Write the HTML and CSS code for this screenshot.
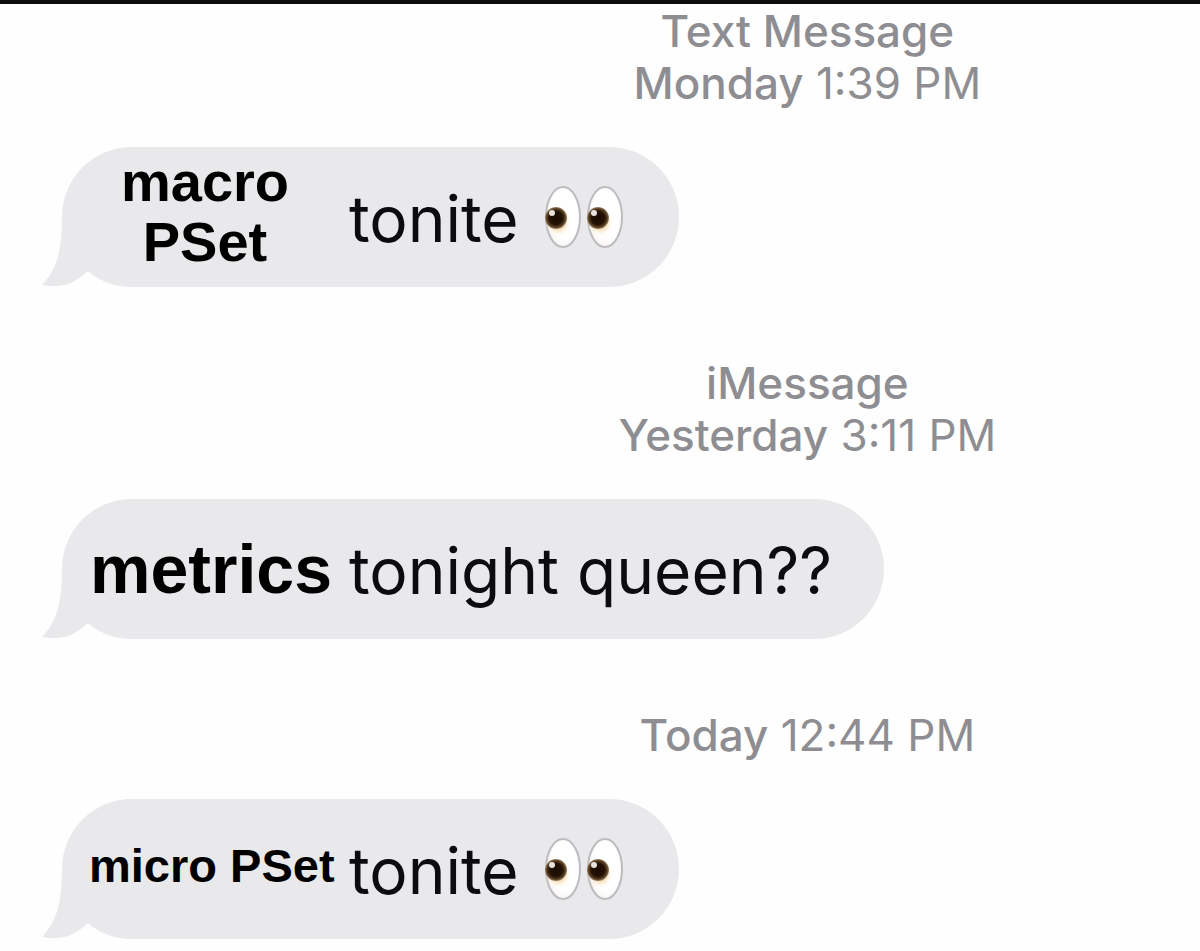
FILE: index.html
```html
<!DOCTYPE html>
<html lang="en">
<head>
<meta charset="utf-8">
<meta name="viewport" content="width=device-width, initial-scale=1">
<title>Messages</title>
<link rel="stylesheet" href="styles.css">
</head>
<body>
<svg class="defs" aria-hidden="true">
  <defs>
    <radialGradient id="white" cx="55%" cy="45%" r="60%">
      <stop offset="0.7" stop-color="#ffffff"/>
      <stop offset="1" stop-color="#f4efea"/>
    </radialGradient>
    <radialGradient id="iris">
      <stop offset="0" stop-color="#180a02"/>
      <stop offset="0.6" stop-color="#241304"/>
      <stop offset="0.85" stop-color="#5b4023"/>
      <stop offset="1" stop-color="#a08a6e"/>
    </radialGradient>
    <radialGradient id="glow">
      <stop offset="0.5" stop-color="#f3dcb4"/>
      <stop offset="1" stop-color="#fff6e6" stop-opacity="0"/>
    </radialGradient>
    <clipPath id="eyeball"><ellipse cx="20" cy="32" rx="18" ry="31"/></clipPath>
    <symbol id="eye" viewBox="0 0 40 64">
      <ellipse cx="20" cy="32" rx="17" ry="30" fill="url(#white)" stroke="#bcbcc0" stroke-width="2"/>
      <g clip-path="url(#eyeball)">
        <ellipse cx="15" cy="37" rx="13" ry="14" fill="url(#glow)"/>
        <circle cx="13" cy="33" r="11" fill="url(#iris)"/>
        <circle cx="9" cy="28" r="3" fill="#e8e2dc"/>
      </g>
    </symbol>
    <symbol id="eyes" viewBox="0 0 84 64">
      <use href="#eye" x="0" y="0" width="40" height="64"/>
      <use href="#eye" x="42" y="0" width="40" height="64"/>
    </symbol>
    <symbol id="tail" viewBox="0 0 60 80">
      <path d="M20 8C20 42 16 61 0 78C18 82 32 77 46 64L60 40L36 8Z"/>
    </symbol>
  </defs>
</svg>
<main class="thread">
  <header class="stamp"><strong class="day">Text Message</strong><span><strong class="day">Monday</strong> 1:39 PM</span></header>
  <article class="bubble">
    <svg class="tail" aria-hidden="true"><use href="#tail"/></svg>
    <span class="label label-stacked">macro<br>PSet</span>
    <span class="text">tonite</span>
    <svg class="eyes" role="img" aria-label="eyes"><use href="#eyes"/></svg>
  </article>
  <header class="stamp"><strong class="day">iMessage</strong><span><strong class="day">Yesterday</strong> 3:11 PM</span></header>
  <article class="bubble">
    <svg class="tail" aria-hidden="true"><use href="#tail"/></svg>
    <span class="label label-large">metrics</span>
    <span class="text">tonight queen??</span>
  </article>
  <header class="stamp"><span><strong class="day">Today</strong> 12:44 PM</span></header>
  <article class="bubble">
    <svg class="tail" aria-hidden="true"><use href="#tail"/></svg>
    <span class="label label-small">micro PSet</span>
    <span class="text">tonite</span>
    <svg class="eyes" role="img" aria-label="eyes"><use href="#eyes"/></svg>
  </article>
</main>
</body>
</html>
```
FILE: styles.css
```css
* {
  box-sizing: border-box;
}

body {
  margin: 0;
  border-top: 4px solid #0e0d10;
  background: #fefefe;
  font-family: Inter, "Liberation Sans", sans-serif;
}

.defs {
  position: absolute;
  width: 0;
  height: 0;
}

.thread {
  display: flex;
  flex-direction: column;
  align-items: flex-start;
  padding: 1px 0 11px 62px;
}

.stamp {
  display: flex;
  flex-direction: column;
  align-self: stretch;
  align-items: center;
  margin-bottom: 38px;
  padding-left: 31%;
  color: #8e8e92;
  font-size: 44px;
  line-height: 52px;
}

.day {
  font-weight: 500;
}

.bubble {
  position: relative;
  display: flex;
  align-items: center;
  min-height: 140px;
  margin-bottom: 70px;
  padding: 0 52px 0 27px;
  border-radius: 70px;
  background: #e9e9eb;
  color: #000;
}

.bubble:last-child {
  margin-bottom: 0;
}

.tail {
  position: absolute;
  bottom: 0;
  left: -20px;
  width: 60px;
  height: 80px;
  fill: #e9e9eb;
}

.label {
  width: 244px;
  margin-right: 16px;
  font-family: "Liberation Sans", Arial, sans-serif;
  font-weight: 700;
  text-align: center;
  white-space: nowrap;
  z-index: 1;
}

.label-stacked {
  padding: 0 12px 10px 0;
  font-size: 56px;
  line-height: 60px;
}

.label-large {
  font-size: 68px;
}

.label-small {
  padding-bottom: 8px;
  font-size: 47px;
}

.text {
  padding-top: 4px;
  color: #0c0c0e;
  font-size: 64px;
  line-height: 72px;
  white-space: nowrap;
}

.eyes {
  width: 84px;
  height: 64px;
  margin-left: 24px;
}
```
